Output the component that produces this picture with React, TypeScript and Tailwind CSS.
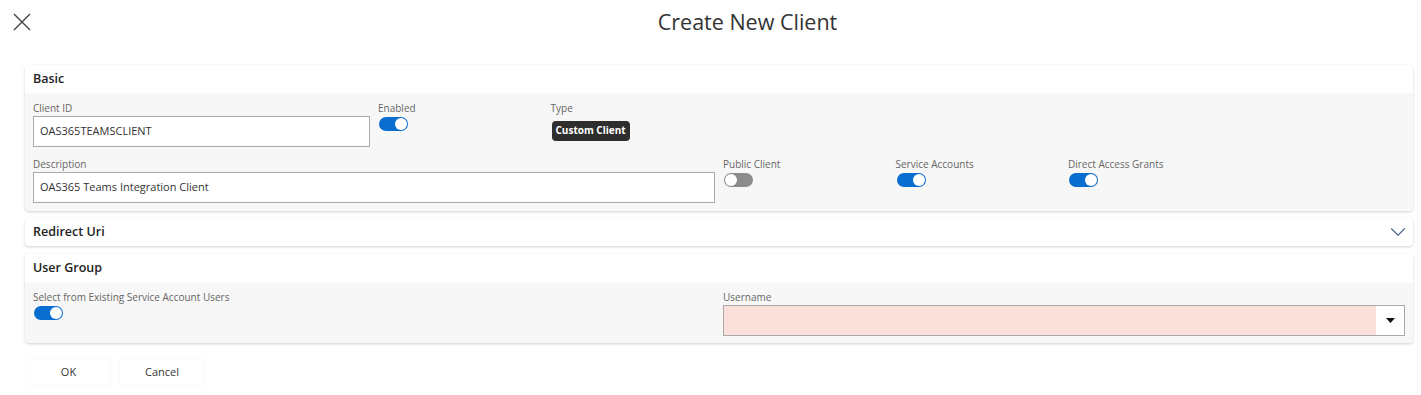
import { ChevronDown } from 'lucide-react';

const Toggle = ({ on }: { on: boolean }) => (
  <div
    className={`flex h-[14px] w-[29px] items-center rounded-full px-[1px] ${
      on ? 'justify-end bg-[#0a6ed1]' : 'justify-start bg-[#8c8c8c]'
    }`}
  >
    <div className="h-[12px] w-[12px] rounded-full bg-white" />
  </div>
);

const Label = ({ children }: { children: React.ReactNode }) => (
  <div className="h-4 text-[10px] leading-4 text-[#666]">{children}</div>
);

const TextField = ({ value }: { value: string }) => (
  <div className="flex h-[31px] items-center border border-[#aaa] bg-white px-[6px] text-[11px] text-[#333]">
    {value}
  </div>
);

const CardHeader = ({ title, chevron }: { title: string; chevron?: boolean }) => (
  <div className="flex h-7 items-center justify-between pl-2 pr-[2px] text-[12.5px] font-semibold text-[#222]">
    <span>{title}</span>
    {chevron && <ChevronDown size={26} strokeWidth={1.1} className="text-[#4f6f8f]" />}
  </div>
);

const App = () => {
  return (
    <div className="min-h-screen bg-white" style={{ fontFamily: '"Open Sans", sans-serif' }}>
      {/* Title bar */}
      <div className="relative flex h-[44px] items-center justify-center pl-[74px]">
        <button className="absolute left-[13px] top-[13px] text-[#444]">
          <svg width="18" height="18" viewBox="0 0 18 18" fill="none">
            <path d="M1 1L17 17M17 1L1 17" stroke="currentColor" strokeWidth="1.4" />
          </svg>
        </button>
        <h1 className="text-[21.5px] text-[#333]">Create New Client</h1>
      </div>

      <div className="px-[25px] pt-[21px] pr-[8px]">
        {/* Basic */}
        <div className="overflow-hidden rounded-[4px] bg-white shadow-[0_1px_3px_rgba(0,0,0,0.18)]">
          <CardHeader title="Basic" />
          <div className="grid grid-cols-8 gap-y-[9px] bg-[#f7f7f7] px-1 pt-[7px] pb-2">
            <div className="col-span-2 px-1">
              <Label>Client ID</Label>
              <TextField value="OAS365TEAMSCLIENT" />
            </div>
            <div className="px-1">
              <Label>Enabled</Label>
              <div className="pt-[1px] pl-[1px]">
                <Toggle on />
              </div>
            </div>
            <div className="col-span-5 px-1">
              <Label>Type</Label>
              <div className="pl-[1px]">
                <span className="inline-flex h-5 items-center rounded-[4px] bg-[#2e2e2e] px-[4px] text-[10px] font-bold text-white">
                  Custom Client
                </span>
              </div>
            </div>
            <div className="col-span-4 px-1">
              <Label>Description</Label>
              <TextField value="OAS365 Teams Integration Client" />
            </div>
            <div className="px-1">
              <Label>Public Client</Label>
              <div className="pt-[1px] pl-[1px]">
                <Toggle on={false} />
              </div>
            </div>
            <div className="px-1">
              <Label>Service Accounts</Label>
              <div className="pt-[1px] pl-[1px]">
                <Toggle on />
              </div>
            </div>
            <div className="col-span-2 px-1">
              <Label>Direct Access Grants</Label>
              <div className="pt-[1px] pl-[1px]">
                <Toggle on />
              </div>
            </div>
          </div>
        </div>

        {/* Redirect Uri */}
        <div className="mt-[7px] overflow-hidden rounded-[4px] bg-white shadow-[0_1px_3px_rgba(0,0,0,0.18)]">
          <CardHeader title="Redirect Uri" chevron />
        </div>

        {/* User Group */}
        <div className="mt-2 overflow-hidden rounded-[4px] bg-white shadow-[0_1px_3px_rgba(0,0,0,0.18)]">
          <div className="h-[29px]">
            <div className="flex h-full items-center px-2 text-[12.5px] font-semibold text-[#222]">User Group</div>
          </div>
          <div className="grid grid-cols-8 bg-[#f7f7f7] px-1 pt-[6px] pb-[7px]">
            <div className="col-span-4 px-1">
              <Label>Select from Existing Service Account Users</Label>
              <div className="pt-[1px] pl-[1px]">
                <Toggle on />
              </div>
            </div>
            <div className="col-span-4 px-1">
              <Label>Username</Label>
              <div className="flex h-[31px] border border-[#aaa] bg-[#fadfdb]">
                <div className="flex-1" />
                <div className="flex w-[28px] items-center justify-center bg-white">
                  <svg width="9" height="5" viewBox="0 0 9 5">
                    <path d="M0 0H9L4.5 5Z" fill="#111" />
                  </svg>
                </div>
              </div>
            </div>
          </div>
        </div>

        {/* Actions */}
        <div className="mt-[15px] flex gap-2 pl-[1px]">
          <button className="h-7 w-[85px] border border-[#fafafa] text-[11px] text-[#333]">OK</button>
          <button className="h-7 w-[86px] border border-[#fafafa] text-[11px] text-[#333]">Cancel</button>
        </div>
      </div>
    </div>
  );
};

export default App;
